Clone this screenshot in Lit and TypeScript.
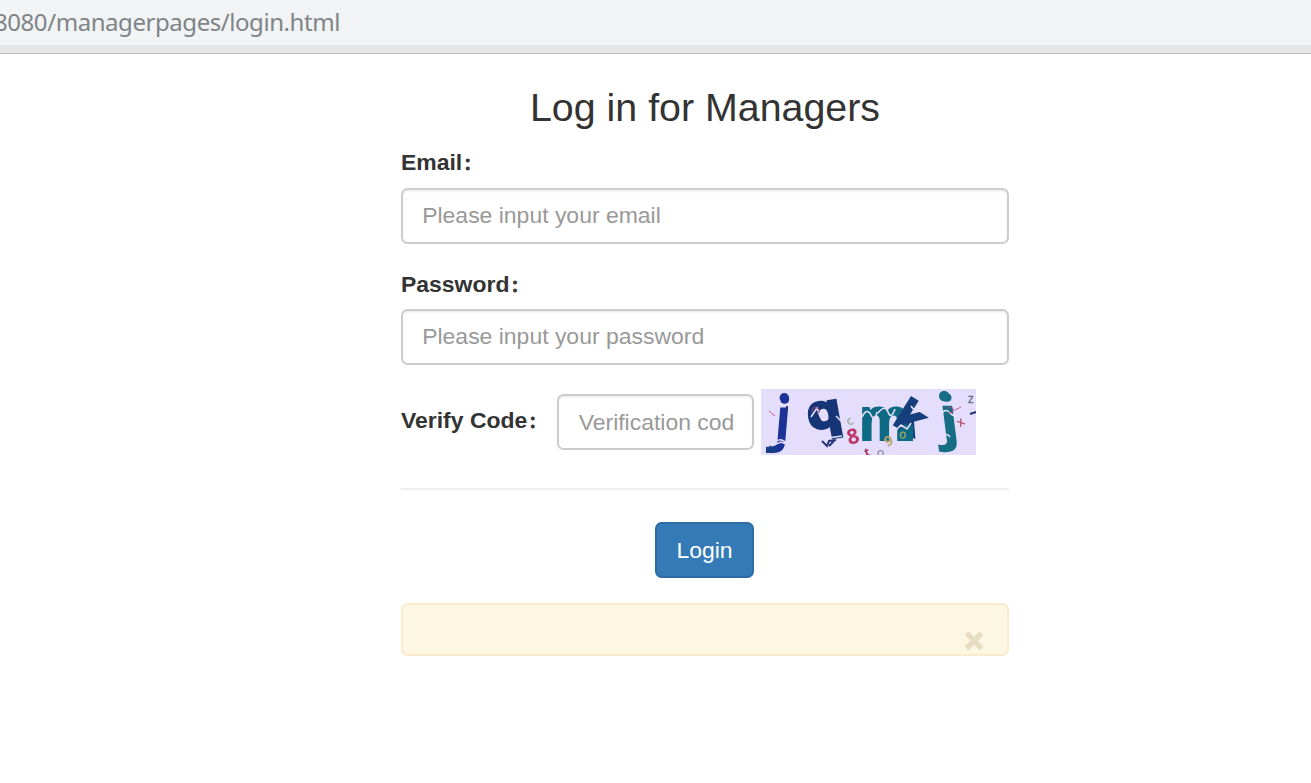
import { LitElement, html, css } from "lit";
import { customElement } from "lit/decorators.js";

@customElement("verify-image")
class VerifyImage extends LitElement {
  static styles = css`
    :host { display: block; width: 215px; height: 66px; }
    svg { display: block; }
    text { font-family: "Open Sans", "Noto Sans", sans-serif; font-weight: 700; }
    .small { font-size: 12px; font-weight: 400; stroke-width: .4; }
    .chip { stroke: #e4defc; fill: none; stroke-width: 1.6; }
  `;
  render() {
    return html`<svg width="215" height="66" viewBox="0 0 215 66" role="img">
      <defs><filter id="soft"><feGaussianBlur stdDeviation="0.65" /></filter></defs>
      <rect width="215" height="66" fill="#e4defc" />
      <g filter="url(#soft)">
        <text transform="matrix(1.1 0 -.1 1.2 12.5 50)" font-size="48" fill="#1b3397">j</text>
        <circle cx="23.3" cy="8.8" r="4.7" fill="#1b3397" />
        <path d="M5 58l8-1 4 3-4 4H5z" fill="#193d86" />
        <text transform="matrix(1.06 -.16 .16 .9 48.5 41)" font-size="51" fill="#153577" stroke="#153577" stroke-width="3">q</text>
        <text transform="matrix(.86 0 0 1 98 51)" font-size="60" fill="#116a84" stroke="#116a84" stroke-width="2">m</text>
        <text transform="matrix(.8 .5 -.5 .8 131 34)" font-size="44" fill="#173d7c" stroke="#173d7c" stroke-width="3">k</text>
        <path d="M140 36h12v16h-10z" fill="#116a84" />
        <text transform="matrix(1.12 0 .13 1.02 180.5 49)" font-size="58" fill="#126d84">j</text>
        <circle cx="183.2" cy="7" r="5.2" fill="#126d84" />
        <path class="chip" d="M14 53q6-5 11 1M10 57l10-4 5 2M50 28l6-9 3 8 5-5M75 27l5 5M59 50l22-3M65 54l14-2M101 28q5-10 9-2t6-3M117 24q7-9 10-1t7-3M133 43l7-7 6 4 4-6M150 17l4 5M180 26q4-8 9-2t10-3M181 48q5-5 8 0M181 54l5-2" />
        <path d="M51 23q0-6 5-4t0 6M186 20q4-4 6 0t-5 4" fill="none" stroke="#a64377" />
        <text transform="translate(88 56) rotate(-15)" font-size="21" fill="#bd3868">8</text>
        <text class="small" transform="translate(88 37) rotate(-30)" fill="#96b49c" stroke="#96b49c">c</text>
        <text transform="translate(126 58) rotate(-24)" font-size="14" fill="#b7a76c">9</text>
        <text class="small" transform="translate(138 49) rotate(5)" fill="#9aa873" stroke="#9aa873">o</text>
        <text transform="translate(105 68) rotate(-20)" font-size="12" fill="#a4315c">t</text>
        <text class="small" transform="translate(116 68)" fill="#8b8faa" stroke="#8b8faa">o</text>
        <text class="small" transform="translate(207 14)" fill="#676b91" stroke="#676b91">z</text>
        <text class="small" transform="translate(199 38) rotate(-35)" fill="#b54e6e" stroke="#b54e6e">x</text>
        <path d="M8 22l6 5M194 21l6-3" stroke="#c95491" fill="none" />
        <path d="M209 25l6-2M26 17v5M61 52l5 5 2-5 7-1M68 57l5-5" stroke="#263477" fill="none" stroke-width="2" />
      </g>
    </svg>`;
  }
}

@customElement("app-root")
class AppRoot extends LitElement {
  static styles = css`
    :host {
      display: block; height: 783px; overflow: hidden; background: #fff; color: #333;
      font: 22.96px/32.8px "Liberation Sans", "Noto Sans CJK SC", sans-serif;
    }
    * { box-sizing: border-box; }
    .address {
      height: 54px; background: #f1f3f5; border-bottom: 1px solid #b9babc;
      box-shadow: inset 0 -8px #e7e7e8; overflow: hidden; white-space: nowrap;
      font: 24px/43px "Noto Sans", sans-serif; letter-spacing: -.44px; color: #7f8487;
    }
    .url { display: block; margin-left: -6px; }
    main { width: 608px; margin-left: 401px; }
    h1 { margin: 0; padding-top: 32px; font-size: 39.36px; line-height: 43px; font-weight: 400; text-align: center; }
    label { display: block; height: 33px; font-weight: 700; white-space: nowrap; }
    .colon { font-size: 16px; line-height: 1; margin-left: 1.5px; -webkit-text-stroke: .8px #333; }
    .group { margin-bottom: 24px; }
    .group label { margin-bottom: 8px; }
    .first { padding-top: 17px; }
    .first label { margin-bottom: 9px; }
    input {
      display: block; width: 100%; height: 56px; padding: 9px 19.2px 11px; margin: 0;
      font: 22.96px/32.8px "Liberation Sans", sans-serif; color: #555; background: #fff;
      border: 2px solid #ccc; border-radius: 6.5px; outline: 0;
      box-shadow: inset 0 1.6px 1.6px rgba(0,0,0,.075);
    }
    input::placeholder { color: #999; opacity: 1; }
    .verify { display: flex; align-items: flex-start; height: 66px; }
    .verify label { width: 156px; padding-top: 15px; }
    .verify input { width: 197px; margin: 5px 7px 0 0; padding: 10px 17.5px 10px 19.7px; }
    hr { margin: 33px 0 32px; border: 0; border-top: 2px solid #eee; }
    button { font-family: inherit; cursor: pointer; }
    .login {
      display: block; width: 99px; height: 56px; margin: 0 0 24.5px 254px; padding: 0;
      font-size: 22.96px; color: #fff; background: #337ab7; border: 2px solid #2e6da4; border-radius: 6.5px;
    }
    .alert {
      height: 53px; display: flex; justify-content: flex-end; padding: 22px 23.5px 0 0;
      background: #fdf6e2; border: 2px solid #faebcc; border-radius: 6.5px;
    }
    .close {
      display: block; padding: 0; border: 0; background: none; height: 29px; font-size: 32.5px; line-height: 29px;
      font-weight: 700; color: #e6dcc1; -webkit-text-stroke: 1.5px #e6dcc1;
    }
  `;
  render() {
    return html`
      <div class="address"><span class="url">8080/managerpages/login.html</span></div>
      <main>
        <h1>Log in for Managers</h1>
        <div class="group first"><label>Email<span class="colon">：</span></label><input placeholder="Please input your email" /></div>
        <div class="group"><label>Password<span class="colon">：</span></label><input type="password" placeholder="Please input your password" /></div>
        <div class="verify">
          <label>Verify Code<span class="colon">：</span></label><input placeholder="Verification code" /><verify-image></verify-image>
        </div>
        <hr />
        <button class="login">Login</button>
        <div class="alert"><button class="close">×</button></div>
      </main>`;
  }
}
